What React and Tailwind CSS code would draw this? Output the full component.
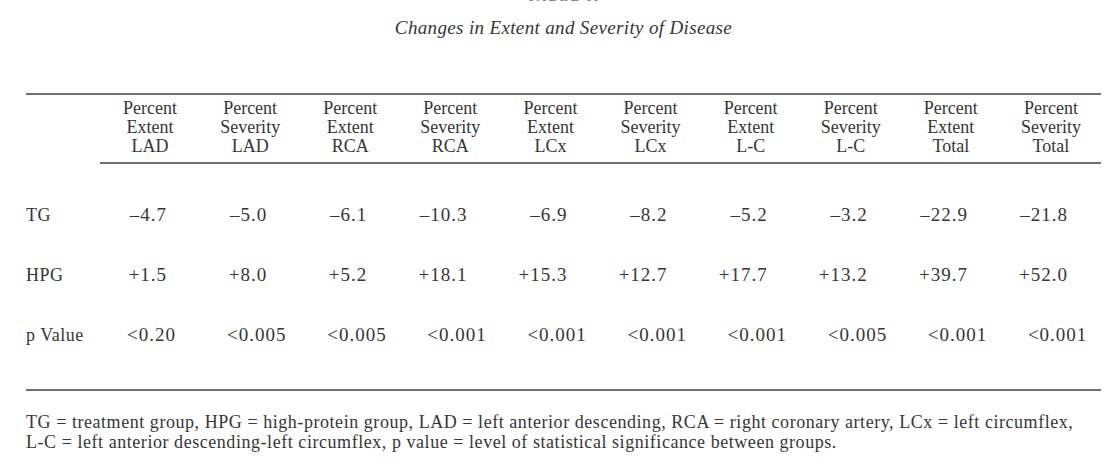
import React from 'react';

// columns of the table, top to bottom of the header
const columns = [
  ['Percent', 'Extent', 'LAD'],
  ['Percent', 'Severity', 'LAD'],
  ['Percent', 'Extent', 'RCA'],
  ['Percent', 'Severity', 'RCA'],
  ['Percent', 'Extent', 'LCx'],
  ['Percent', 'Severity', 'LCx'],
  ['Percent', 'Extent', 'L-C'],
  ['Percent', 'Severity', 'L-C'],
  ['Percent', 'Extent', 'Total'],
  ['Percent', 'Severity', 'Total'],
];

const rows = [
  { label: 'TG', values: ['–4.7', '–5.0', '–6.1', '–10.3', '–6.9', '–8.2', '–5.2', '–3.2', '–22.9', '–21.8'] },
  { label: 'HPG', values: ['+1.5', '+8.0', '+5.2', '+18.1', '+15.3', '+12.7', '+17.7', '+13.2', '+39.7', '+52.0'] },
  { label: 'p Value', values: ['<0.20', '<0.005', '<0.005', '<0.001', '<0.001', '<0.001', '<0.001', '<0.005', '<0.001', '<0.001'], left: true },
];

export default function App() {
  return (
    <div className="w-[1106px] h-[474px] overflow-hidden bg-white pl-[26px] pr-[5px] text-[#363636] font-['Liberation_Serif',serif]">
      {/* table number, cut off at the top of the scan */}
      <div className="-mt-[12px] h-[18px] text-center text-[14px] leading-[18px] tracking-[0.15em] text-[#777]">TABLE II</div>

      <div className="mt-[10px] text-center text-[19px] leading-[24px] italic tracking-[0.35px]">
        Changes in Extent and Severity of Disease
      </div>

      <div className="mt-[53px] h-[2px] bg-[#707070]" />

      <div className="grid grid-cols-[74px_repeat(10,1fr)]">
        {/* header */}
        <div />
        {columns.map((c, i) => (
          <div key={i} className="pt-[4px] pb-[6px] text-center text-[18px] leading-[19px]">
            {c.map((line, j) => (
              <div key={j}>{line}</div>
            ))}
          </div>
        ))}
        <div />
        <div className="col-span-10 h-[2px] bg-[#707070]" />

        <div className="col-span-11 h-[21px]" />

        {rows.map((row) => (
          <React.Fragment key={row.label}>
            <div className="flex h-[60px] items-center text-[18px] tracking-[0.5px]">{row.label}</div>
            {row.values.map((v, i) => (
              <div
                key={i}
                className={`flex h-[60px] items-center text-[19px] tracking-[1px] ${row.left ? 'justify-start pl-[27px]' : 'justify-end pr-[33px]'}`}
              >
                {v}
              </div>
            ))}
          </React.Fragment>
        ))}
      </div>

      <div className="mt-[24px] h-[2px] bg-[#707070]" />

      <div className="mt-[22px] text-[18px] leading-[19.5px] tracking-[0.55px]">
        <div>
          TG = treatment group, HPG = high-protein group, LAD = left anterior descending, RCA = right coronary artery, LCx = left circumflex,
        </div>
        <div>L-C = left anterior descending-left circumflex, p value = level of statistical significance between groups.</div>
      </div>
    </div>
  );
}
